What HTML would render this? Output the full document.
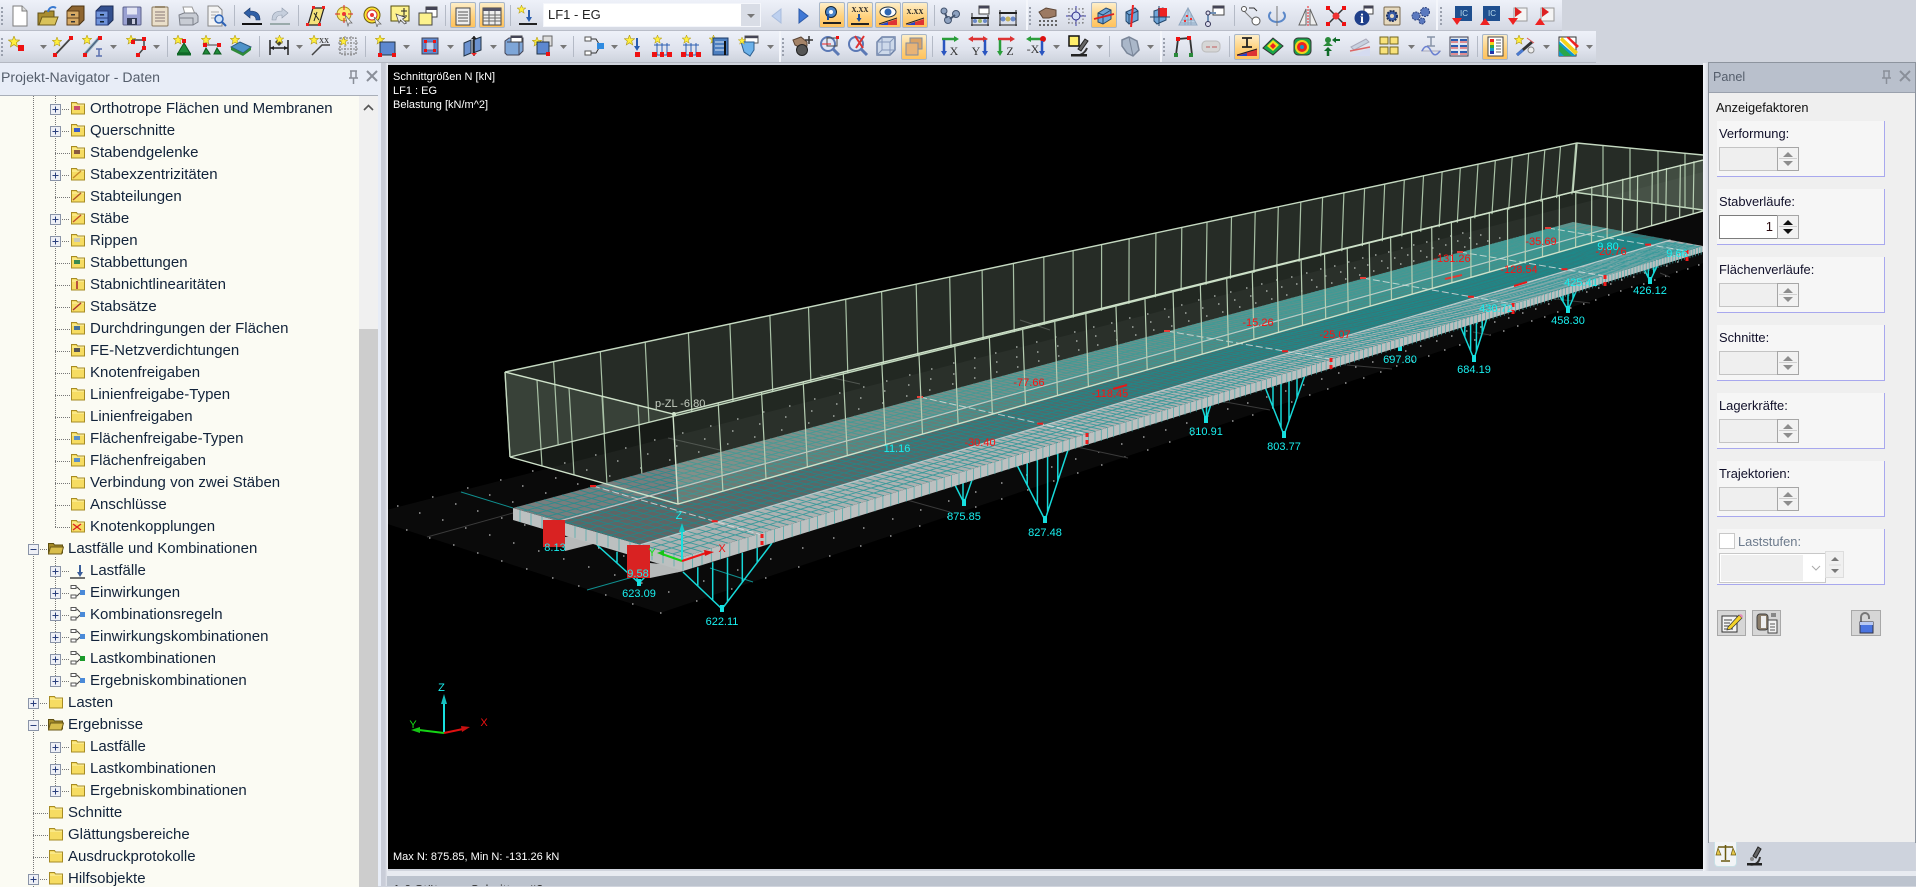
<!DOCTYPE html>
<html lang="de"><head><meta charset="utf-8"><title>Projekt-Navigator</title>
<style>
html,body{margin:0;padding:0;width:1916px;height:886px;overflow:hidden;background:#d0d4dd;font-family:"Liberation Sans",Arial,sans-serif}
.a{position:absolute}
#tb1{position:absolute;left:0;top:0;width:1562px;height:30px;background:linear-gradient(#eef1f9,#dfe3ed 60%,#d5d9e3);border-bottom:1px solid #b9bdc8}
#tb2{position:absolute;left:0;top:31px;width:1596px;height:31px;background:linear-gradient(#eef1f9,#dfe3ed 60%,#ced3dd);border-bottom:1px solid #b4b8c2}
#tools{position:absolute;left:0;top:0;width:1916px;height:64px}
.act{position:absolute;width:26px;height:26px;border:1px solid #a8b6c8;border-radius:2px;background:linear-gradient(#fdeec9,#ffd27f 55%,#ffc25c);box-sizing:border-box}
#combo{position:absolute;left:544px;top:4px;width:216px;height:22px;background:#fff;font-size:13px;line-height:22px;color:#222;text-indent:4px;box-shadow:0 0 0 1px #f4f6fb}
#combo i{position:absolute;right:0;top:0;width:19px;height:22px;background:#d9dde6}
#combo i:after{content:"";position:absolute;left:6px;top:10px;border:4px solid transparent;border-top-color:#777;border-bottom:0}
#nav{position:absolute;left:0;top:63px;width:381px;height:823px;background:#e8edf7}
#navt{position:absolute;left:1px;top:3px;font-size:14.1px;line-height:22px;color:#555e6c;white-space:nowrap}
#tree{position:absolute;left:0;top:95px;width:378px;height:791px;background:#fbfbf3;border-top:1px solid #a9afb9;overflow:hidden}
#sb{position:absolute;left:359px;top:0;width:19px;height:791px;background:#f0f0f0}
#th{position:absolute;left:0;top:233px;width:19px;height:558px;background:#cdcdcd}
.r{position:absolute;font-size:15px;line-height:22px;height:22px;color:#12233a;white-space:nowrap;margin-top:1px}
.l2{left:90px}.l1{left:68px}
#gap{position:absolute;left:381px;top:63px;width:7px;height:823px;background:linear-gradient(90deg,#c9cdd8 0,#c9cdd8 57%,#f0f2f7 100%)}
#view{position:absolute;left:388px;top:65px;width:1315px;height:804px;background:#000;overflow:hidden}
#view svg{display:block}
#view text{font-family:"Liberation Sans",Arial,sans-serif;font-size:11px}
.vt{position:absolute;left:5px;color:#fff;font-size:11px;line-height:14px;white-space:nowrap}
#bot{position:absolute;left:387px;top:871px;width:1529px;height:15px;background:#e8ebf1}
#botb{position:absolute;left:387px;top:876px;width:1529px;height:10px;background:#bcc3ce;overflow:hidden}
#botb span{position:absolute;left:6px;top:6px;font-size:13px;line-height:15px;color:#333;white-space:nowrap}
#pan{position:absolute;left:1709px;top:63px;width:206px;height:779px;background:#efefef;box-shadow:0 0 0 1px #8d949e}
#pant{position:absolute;left:0;top:0;width:206px;height:29px;background:#b9c0cc;border-bottom:1px solid #9aa1ad}
#pant span{position:absolute;left:4px;top:3px;font-size:12.6px;line-height:22px;color:#555e6c}
.g{position:absolute;left:1717px;width:167px;height:55px;background:#f6f6f6;border-right:1px solid #a8a8ee;border-bottom:1px solid #a8a8ee;box-sizing:content-box}
.lb{position:absolute;left:2px;top:4px;font-size:12.9px;line-height:18px;color:#11102a;white-space:nowrap}
.sp{position:absolute;left:2px;top:26px;width:79px;height:24px;background:#efefef;border:1px solid #c4c4c4;box-sizing:border-box}
.sp b{position:absolute;left:57px;top:-1px;width:22px;height:24px;background:#f2f2f2;border:1px solid #a6a6a6;box-sizing:border-box}
.sp b:before,.sp b:after{content:"";position:absolute;left:5px;border:5px solid transparent}
.sp b:before{top:-1px;border-bottom:5px solid #8d8d8d;border-top:0;margin-top:5px}
.sp b:after{bottom:4px;border-top:5px solid #8d8d8d;border-bottom:0}
.sp u{position:absolute;left:1px;right:1px;top:10px;height:1px;background:#cfcfcf;text-decoration:none}
.sp.on{background:#fff;border-color:#7c7c7c}
.sp.on b:before{border-bottom-color:#111}.sp.on b:after{border-top-color:#111}
.sp.on span{position:absolute;right:24px;top:2px;font-size:13px;line-height:18px;color:#2a0b10}
.bt{position:absolute;top:610px;height:26px;background:#d6d6d6;border:1px solid #a8a8a8;box-sizing:border-box}
.bt svg,.tabi svg{display:block;margin:auto}
#tabs{position:absolute;left:1709px;top:842px;width:206px;height:29px;background:#ced3dd}
</style></head><body>

<svg width="0" height="0" style="position:absolute"><defs>
<symbol id="st" viewBox="0 0 10 10"><path d="M5 0l1.200 3.200 3.500.2-2.700 2.100.9 3.500L5 7.100 2.100 9l.9-3.500L.3 3.400l3.500-.2z" fill="#ffef3c" stroke="#b39c1a" stroke-width=".6"/></symbol>
<symbol id="new" viewBox="0 0 22 22"><path d="M4 1h9l5 5v15H4z" fill="#fff" stroke="#7c7c7c"/><path d="M13 1v5h5" fill="#ddd" stroke="#7c7c7c"/></symbol>
<symbol id="open" viewBox="0 0 22 22"><path d="M1 8h6l1-2h9v14H1z" fill="#a98d2f" stroke="#5f4f17"/><path d="M2 20l3-8h16l-3 8z" fill="#d9c25a" stroke="#6b5a1a"/><path d="M11 7c1-5 5-6 8-4" fill="none" stroke="#3a7ad0" stroke-width="2"/></symbol>
<symbol id="dbr" viewBox="0 0 22 22"><path d="M3 6l5-5h12v14l-5 5H3z" fill="#8e6530" stroke="#4c3312"/><rect x="3" y="6" width="12" height="7" fill="#d6a964" stroke="#5c3d1a"/><rect x="3" y="13" width="12" height="7" fill="#d6a964" stroke="#5c3d1a"/><rect x="7" y="9" width="4" height="1.500" fill="#333"/><rect x="7" y="16" width="4" height="1.500" fill="#333"/></symbol>
<symbol id="dbb" viewBox="0 0 22 22"><path d="M3 6l5-5h12v14l-5 5H3z" fill="#33508f" stroke="#1c2d55"/><rect x="3" y="6" width="12" height="7" fill="#6f93da" stroke="#24397a"/><rect x="3" y="13" width="12" height="7" fill="#6f93da" stroke="#24397a"/><rect x="7" y="9" width="4" height="1.500" fill="#123"/><rect x="7" y="16" width="4" height="1.500" fill="#123"/></symbol>
<symbol id="save" viewBox="0 0 22 22"><rect x="2" y="2" width="18" height="18" rx="1" fill="#9aa1d2" stroke="#5d628c"/><rect x="6" y="2.500" width="10" height="7" fill="#e4e6f4"/><rect x="6" y="13" width="10" height="7" fill="#333b55"/><rect x="11" y="14" width="3" height="5" fill="#c6c9dc"/></symbol>
<symbol id="note" viewBox="0 0 22 22"><rect x="3" y="2" width="16" height="19" rx="1" fill="#eadfca" stroke="#8a7a60"/><path d="M6 7h10M6 10h10M6 13h10M6 16h10" stroke="#877"/><rect x="6" y="1" width="10" height="2" fill="#998a70"/></symbol>
<symbol id="print" viewBox="0 0 22 22"><path d="M6 2h9l3 7H8z" fill="#fff" stroke="#999"/><path d="M2 10l5-2h12l2 3v6l-5 3H3z" fill="#c8ccd4" stroke="#7c808a"/><path d="M3 13h13v7" fill="none" stroke="#7c808a"/></symbol>
<symbol id="prev" viewBox="0 0 22 22"><path d="M3 1h10l4 4v16H3z" fill="#f4f4f4" stroke="#888"/><path d="M6 7h8M6 10h5M6 13h4" stroke="#aaa"/><circle cx="14" cy="14" r="4" fill="#cfe3fa" stroke="#2f63b5" stroke-width="1.500"/><path d="M17 17l4 4" stroke="#2f63b5" stroke-width="2"/></symbol>
<symbol id="undo" viewBox="0 0 22 22"><path d="M3 8l6-5v3c6 0 10 2 10 9h-4c0-3-2-5-6-5v3z" fill="#2f5fa6" stroke="#1b3866" stroke-width=".6"/><rect x="1" y="18" width="20" height="2" fill="#111"/></symbol>
<symbol id="redo" viewBox="0 0 22 22"><path d="M19 8l-6-5v3C7 6 3 8 3 15h4c0-3 2-5 6-5v3z" fill="#c6cfdd" stroke="#8f9aab" stroke-width=".6"/><rect x="1" y="18" width="20" height="2" fill="#9aa"/></symbol>
<symbol id="para" viewBox="0 0 22 22"><path d="M8 3h11l-5 17H3z" fill="#f4e27a" stroke="#222" stroke-width="1.200"/><path d="M12 7l-3 9M9 8l5 7" stroke="#222"/><rect x="7" y="1" width="3" height="3" fill="#e22"/><rect x="17" y="1" width="3" height="3" fill="#e22"/><rect x="1" y="18" width="3" height="3" fill="#e22"/><rect x="13" y="18" width="3" height="3" fill="#e22"/></symbol>
<symbol id="tgt1" viewBox="0 0 22 22"><circle cx="10" cy="9" r="7" fill="#fbe96d" stroke="#a3901f"/><path d="M10 0v5M10 13v5M1 9h5M14 9h5" stroke="#d22"/><circle cx="10" cy="9" r="2" fill="#e33"/><path d="M11 10l7 8-3 0-1 3z" fill="#eee" stroke="#666" stroke-width=".7"/></symbol>
<symbol id="tgt2" viewBox="0 0 22 22"><circle cx="10" cy="10" r="8" fill="#fbe232" stroke="#6a5c10"/><circle cx="10" cy="10" r="5" fill="#fff" stroke="#c33"/><circle cx="10" cy="10" r="2" fill="#e33"/><path d="M12 12l7 7-3 0-1 3z" fill="#eee" stroke="#666" stroke-width=".7"/></symbol>
<symbol id="ynote" viewBox="0 0 22 22"><rect x="2" y="1" width="18" height="15" fill="#fdf28d" stroke="#554e10"/><path d="M15 3v7M12 6h6M12 11h6" stroke="#222"/><path d="M7 9l3 9 1.500-3 4 4 2-1-4-4 3-1.500z" fill="#eee" stroke="#444" stroke-width=".7"/></symbol>
<symbol id="wins" viewBox="0 0 22 22"><rect x="9" y="2" width="11" height="10" fill="#fff" stroke="#444"/><rect x="9" y="2" width="11" height="3" fill="#445"/><rect x="2" y="8" width="13" height="12" fill="#fdf28d" stroke="#444"/></symbol>
<symbol id="list" viewBox="0 0 22 22"><rect x="4" y="3" width="14" height="17" fill="#eee" stroke="#444"/><path d="M6 7h10M6 10h10M6 13h10M6 16h10" stroke="#555"/></symbol>
<symbol id="table" viewBox="0 0 22 22"><rect x="2" y="3" width="18" height="17" fill="#eee" stroke="#444"/><rect x="2" y="3" width="18" height="3" fill="#556"/><path d="M2 10h18M2 13h18M2 16h18M8 6v14M14 6v14" stroke="#666"/></symbol>
<symbol id="lc" viewBox="0 0 22 22"><use href="#st" x="0" y="0" width="9" height="9"/><path d="M12 5v9" stroke="#2a5db0" stroke-width="2"/><path d="M9 12l3 5 3-5z" fill="#2a5db0"/><rect x="2" y="18" width="18" height="2" fill="#222"/></symbol>
<symbol id="la" viewBox="0 0 22 22"><path d="M15 4L6 11l9 7z" fill="#bdd0ef" stroke="#a9bddd"/></symbol>
<symbol id="ra" viewBox="0 0 22 22"><path d="M7 4l9 7-9 7z" fill="#3f78d6" stroke="#2d5aa8"/></symbol>
<symbol id="eyeP" viewBox="0 0 22 22"><circle cx="10" cy="7" r="5.500" fill="#4c86c9" stroke="#123" stroke-width="1"/><circle cx="10" cy="7" r="2" fill="#fff"/><path d="M7 9v6" stroke="#1c4fa0" stroke-width="2"/><rect x="2" y="17" width="18" height="2" fill="#222"/></symbol>
<symbol id="xxl" viewBox="0 0 22 22"><text x="11" y="7" text-anchor="middle" font-family="Liberation Serif,serif" font-size="7" font-weight="700" fill="#222">X.XX</text><path d="M10 9v6" stroke="#1c4fa0" stroke-width="2"/><path d="M7.500 13l2.500 4 2.500-4z" fill="#1c4fa0"/><rect x="2" y="18" width="18" height="2" fill="#222"/></symbol>
<symbol id="eye" viewBox="0 0 22 22"><ellipse cx="11" cy="7" rx="8" ry="5" fill="#fff" stroke="#234"/><circle cx="11" cy="7" r="3.500" fill="#2f66b3"/><path d="M2 20l18-6v6z" fill="#d33"/><path d="M2 20l9-3v3z" fill="#24c"/><path d="M2 19l18-6" stroke="#222"/></symbol>
<symbol id="xxa" viewBox="0 0 22 22"><text x="11" y="9" text-anchor="middle" font-family="Liberation Serif,serif" font-size="7" font-weight="700" fill="#222">X.XX</text><path d="M2 20l18-6v6z" fill="#d33"/><path d="M2 20l9-3v3z" fill="#24c"/><path d="M2 19l18-6" stroke="#222"/></symbol>
<symbol id="chain" viewBox="0 0 22 22"><circle cx="5" cy="6" r="3" fill="#8ea2c0" stroke="#44546e"/><circle cx="9" cy="15" r="3.500" fill="#8ea2c0" stroke="#44546e"/><circle cx="17" cy="9" r="3.500" fill="#8ea2c0" stroke="#44546e"/><path d="M6 8l2 5M11 14l5-4" stroke="#44546e" stroke-width="2"/></symbol>
<symbol id="nod1" viewBox="0 0 22 22"><rect x="10" y="1" width="10" height="8" fill="#fff" stroke="#444"/><rect x="10" y="1" width="10" height="2.500" fill="#445"/><path d="M2 13h18" stroke="#222" stroke-width="2"/><path d="M3 8v13M19 10v11M2 20h18" stroke="#222"/><circle cx="6" cy="16" r="2" fill="#6a89c8"/><circle cx="11" cy="16" r="2" fill="#9bb26a"/><circle cx="16" cy="16" r="2" fill="#6a89c8"/></symbol>
<symbol id="nod2" viewBox="0 0 22 22"><path d="M2 8h18" stroke="#222" stroke-width="2"/><path d="M3 5v16M19 5v16M2 20h18" stroke="#222"/><circle cx="6" cy="14" r="2.500" fill="#6a89c8"/><circle cx="11" cy="14" r="2.500" fill="#c3b25a"/><circle cx="16" cy="14" r="2.500" fill="#6a89c8"/></symbol>
<symbol id="hand" viewBox="0 0 22 22"><path d="M2 7l7-4 10 2v6l-7 2H6z" fill="#9c7a63" stroke="#5a4434"/><g fill="#666"><rect x="2" y="15" width="2" height="2"/><rect x="6" y="15" width="2" height="2"/><rect x="10" y="15" width="2" height="2"/><rect x="14" y="15" width="2" height="2"/><rect x="18" y="15" width="2" height="2"/><rect x="2" y="19" width="2" height="2"/><rect x="6" y="19" width="2" height="2"/><rect x="10" y="19" width="2" height="2"/><rect x="14" y="19" width="2" height="2"/><rect x="18" y="19" width="2" height="2"/></g></symbol>
<symbol id="grid" viewBox="0 0 22 22"><path d="M1 11h20M11 1v20" stroke="#3a3aa8"/><circle cx="11" cy="11" r="4" fill="#d6def5" stroke="#2a2a88"/><path d="M3 4h16M3 18h16M4 3v16M18 3v16" stroke="#666" stroke-dasharray="1.500 2"/></symbol>
<symbol id="cube1" viewBox="0 0 22 22"><path d="M5 8l8-5 5 2v9l-8 5-5-2z" fill="#6fa5d8" stroke="#24486d"/><path d="M5 8l5 2v9M10 10l8-5" fill="none" stroke="#24486d"/><path d="M1 14L21 9" stroke="#d22" stroke-width="1.800"/></symbol>
<symbol id="cube2" viewBox="0 0 22 22"><path d="M5 7l9-4 3 3v9l-9 4-3-3z" fill="#6fa5d8" stroke="#24486d"/><path d="M5 7l3 3v9M8 10l9-4" fill="none" stroke="#24486d"/><path d="M12 0L10 22" stroke="#e22" stroke-width="2"/></symbol>
<symbol id="cube3" viewBox="0 0 22 22"><path d="M5 6l9-3 3 3v9l-9 4-3-3z" fill="#6fa5d8" stroke="#24486d"/><rect x="9" y="3" width="9" height="9" fill="#e22"/><path d="M1 12h20M10 1v20" stroke="#24486d"/></symbol>
<symbol id="mesh" viewBox="0 0 22 22"><path d="M2 20L11 3l9 17z" fill="#bcd3e8" stroke="#8fa6bf"/><path d="M5 15h12M3 18h16M8 8v12M11 4v16M14 8v12" stroke="#93a8c0"/><g fill="#e33"><rect x="9" y="10" width="2" height="2"/><rect x="13" y="13" width="2" height="2"/><rect x="7" y="15" width="2" height="2"/></g></symbol>
<symbol id="path" viewBox="0 0 22 22"><rect x="9" y="1" width="11" height="9" fill="#fff" stroke="#444"/><rect x="9" y="1" width="11" height="2.500" fill="#445"/><path d="M4 20V8h8" fill="none" stroke="#6f8fb5" stroke-width="2"/><circle cx="4" cy="19" r="2.500" fill="#dde" stroke="#335"/><circle cx="4" cy="8" r="2" fill="#dde" stroke="#335"/></symbol>
<symbol id="link" viewBox="0 0 22 22"><path d="M3 5l14 14" stroke="#777"/><circle cx="4" cy="4" r="2.500" fill="#fff" stroke="#555"/><circle cx="16" cy="16" r="4" fill="#fff" stroke="#555"/><path d="M9 3h5l3 3" fill="none" stroke="#333"/></symbol>
<symbol id="rot" viewBox="0 0 22 22"><path d="M5 7a8 6 0 1 0 12 0" fill="none" stroke="#5b88c9" stroke-width="2"/><path d="M11 1v20" stroke="#777"/></symbol>
<symbol id="mirror" viewBox="0 0 22 22"><path d="M9 4L2 20h7zM13 4l7 16h-7z" fill="#eee" stroke="#666"/><path d="M11 1v20" stroke="#e22" stroke-dasharray="2 1"/></symbol>
<symbol id="xn" viewBox="0 0 22 22"><path d="M3 3l16 16M19 3L3 19" stroke="#333" stroke-width="1.500"/><circle cx="11" cy="11" r="3.500" fill="#e33"/><g fill="#e11"><rect x="1" y="1" width="4" height="4"/><rect x="17" y="1" width="4" height="4"/><rect x="1" y="17" width="4" height="4"/><rect x="17" y="17" width="4" height="4"/></g></symbol>
<symbol id="info" viewBox="0 0 22 22"><rect x="11" y="1" width="9" height="8" fill="#fff" stroke="#444"/><rect x="11" y="1" width="9" height="2.500" fill="#445"/><circle cx="9" cy="13" r="7.500" fill="#1f3f8a"/><text x="9" y="18" text-anchor="middle" font-family="Liberation Serif,serif" font-size="14" font-weight="700" fill="#fff">i</text></symbol>
<symbol id="gear" viewBox="0 0 22 22"><rect x="3" y="2" width="16" height="18" rx="1" fill="#e6d9be" stroke="#7a6a50"/><circle cx="11" cy="11" r="5" fill="#3a5da8" stroke="#1b2f5f" stroke-width="2" stroke-dasharray="2 1"/><circle cx="11" cy="11" r="2" fill="#e6d9be"/></symbol>
<symbol id="gears" viewBox="0 0 22 22"><g fill="#5b79bf" stroke="#2a3f7c" stroke-dasharray="2 1"><circle cx="6" cy="11" r="4"/><circle cx="15" cy="7" r="4.500"/><circle cx="12" cy="16" r="3"/></g></symbol>
<symbol id="ex1" viewBox="0 0 22 22"><rect x="4" y="1" width="17" height="15" fill="#1f4f8f"/><text x="13" y="11" text-anchor="middle" font-size="8" fill="#bde">IC</text><path d="M1 13h10l-5 7z" fill="#e22"/></symbol>
<symbol id="ex2" viewBox="0 0 22 22"><rect x="4" y="1" width="17" height="15" fill="#1f4f8f"/><text x="13" y="11" text-anchor="middle" font-size="8" fill="#bde">IC</text><path d="M1 20h10L6 13z" fill="#e22"/></symbol>
<symbol id="pdf1" viewBox="0 0 22 22"><rect x="7" y="3" width="13" height="13" fill="#f4f4f4" stroke="#999"/><path d="M8 2l7 5-7 5z" fill="#d22"/><path d="M1 13h10l-5 7z" fill="#e22"/></symbol>
<symbol id="pdf2" viewBox="0 0 22 22"><rect x="7" y="3" width="13" height="13" fill="#f4f4f4" stroke="#999"/><path d="M8 2l7 5-7 5z" fill="#d22"/><path d="M1 20h10L6 13z" fill="#e22"/></symbol>
<symbol id="nstar" viewBox="0 0 22 22"><use href="#st" x="1" y="1" width="12" height="12"/><rect x="11" y="10" width="6" height="6" fill="#e11"/></symbol>
<symbol id="line" viewBox="0 0 22 22"><use href="#st" x="0" y="2" width="10" height="10"/><path d="M3 20L19 3" stroke="#444" stroke-width="1.800"/><rect x="1" y="18" width="4" height="4" fill="#e11"/><rect x="17" y="1" width="4" height="4" fill="#e11"/></symbol>
<symbol id="linei" viewBox="0 0 22 22"><use href="#st" x="0" y="0" width="10" height="10"/><path d="M3 19L17 3" stroke="#8ab" stroke-width="3"/><path d="M3 19L17 3" stroke="#457"/><rect x="1" y="18" width="4" height="4" fill="#e11"/><rect x="16" y="1" width="4" height="4" fill="#e11"/><path d="M14 14h6M17 14v7M14 21h6" stroke="#5a6fae" stroke-width="1.500"/></symbol>
<symbol id="poly" viewBox="0 0 22 22"><use href="#st" x="0" y="0" width="10" height="10"/><path d="M6 5h12v8l-6 7" fill="none" stroke="#444" stroke-width="1.500"/><rect x="16" y="2" width="4" height="4" fill="#e11"/><rect x="16" y="11" width="4" height="4" fill="#e11"/><rect x="10" y="18" width="4" height="4" fill="#e11"/><rect x="5" y="5" width="4" height="4" fill="#e11"/></symbol>
<symbol id="sup" viewBox="0 0 22 22"><use href="#st" x="0" y="0" width="10" height="10"/><rect x="9" y="4" width="4" height="4" fill="#e11"/><path d="M11 8l-6 10h12z" fill="#1f8a3a" stroke="#0d5a20"/><rect x="4" y="18" width="14" height="2.500" fill="#0f6a28"/></symbol>
<symbol id="sups" viewBox="0 0 22 22"><use href="#st" x="0" y="0" width="10" height="10"/><path d="M3 10h16" stroke="#444"/><rect x="2" y="8" width="4" height="4" fill="#e11"/><rect x="16" y="8" width="4" height="4" fill="#e11"/><path d="M5 13l-3 6h7zM16 13l-3 6h7z" fill="#1f8a3a" stroke="#0d5a20"/></symbol>
<symbol id="surf2" viewBox="0 0 22 22"><use href="#st" x="0" y="0" width="10" height="10"/><path d="M1 12l9-5 11 5-8 6z" fill="#4f93c9" stroke="#2a5780"/><path d="M1 12v3l12 6 8-6v-3l-8 6z" fill="#2f8a3a"/></symbol>
<symbol id="dim" viewBox="0 0 22 22"><path d="M2 5v15M20 5v15M2 13h18" stroke="#222" stroke-width="1.500"/><path d="M2 13l4-2v4zM20 13l-4-2v4z" fill="#222"/><path d="M11 3l4 4-4 4-4-4z" fill="#443"/><use href="#st" x="7" y="0" width="9" height="9"/></symbol>
<symbol id="xxln" viewBox="0 0 22 22"><use href="#st" x="0" y="0" width="10" height="10"/><path d="M3 20L13 10h8" fill="none" stroke="#444" stroke-width="1.500"/><text x="15" y="8" text-anchor="middle" font-family="Liberation Serif,serif" font-size="7" font-weight="700" fill="#444">XX</text></symbol>
<symbol id="gridb" viewBox="0 0 22 22"><rect x="3" y="3" width="16" height="16" fill="none" stroke="#666" stroke-dasharray="2 1"/><path d="M8 1v20M14 1v20M1 8h20M1 14h20" stroke="#888" stroke-dasharray="2 1"/><use href="#st" x="2" y="2" width="9" height="9"/></symbol>
<symbol id="surfn" viewBox="0 0 22 22"><use href="#st" x="0" y="0" width="10" height="10"/><rect x="5" y="7" width="15" height="13" fill="#5d88d0" stroke="#234"/><rect x="3" y="18" width="4" height="4" fill="#e11"/><rect x="17" y="18" width="4" height="4" fill="#e11"/></symbol>
<symbol id="sq" viewBox="0 0 22 22"><rect x="3" y="3" width="16" height="16" fill="#5d88d0" stroke="#445"/><rect x="7" y="7" width="8" height="8" fill="#bcd0ee" stroke="#668"/><g fill="#e11"><rect x="5" y="5" width="3" height="3"/><rect x="14" y="5" width="3" height="3"/><rect x="5" y="14" width="3" height="3"/><rect x="14" y="14" width="3" height="3"/></g></symbol>
<symbol id="plates" viewBox="0 0 22 22"><path d="M2 8l7-3v13l-7 3zM11 5l8-3v13l-8 3z" fill="#6b92d0" stroke="#234"/><path d="M12 1v20" stroke="#222" stroke-width="1.500"/><path d="M9 4l3-3 3 3z" fill="#222"/><path d="M9 18l3 3 3-3z" fill="#e22"/></symbol>
<symbol id="solid" viewBox="0 0 22 22"><path d="M3 6l4-3h14v13l-4 4H5l-2-2z" fill="#7ea6d8" stroke="#445"/><path d="M5 7h12v13" fill="none" stroke="#445"/><rect x="9" y="1" width="11" height="6" fill="#fff" stroke="#444"/><rect x="9" y="1" width="11" height="2" fill="#445"/></symbol>
<symbol id="surfs" viewBox="0 0 22 22"><use href="#st" x="0" y="2" width="10" height="10"/><rect x="11" y="1" width="9" height="10" fill="#ddd" stroke="#666"/><rect x="5" y="7" width="12" height="12" fill="#5d88d0" stroke="#234"/><rect x="14" y="17" width="4" height="4" fill="#e11"/></symbol>
<symbol id="conn" viewBox="0 0 22 22"><rect x="2" y="2" width="6" height="4" fill="#fff" stroke="#555"/><rect x="2" y="16" width="6" height="4" fill="#fff" stroke="#555"/><path d="M8 4h5l3 5M8 18h5l3-5" fill="none" stroke="#333"/><rect x="14" y="8" width="7" height="6" fill="#2f8be0"/></symbol>
<symbol id="load" viewBox="0 0 22 22"><use href="#st" x="0" y="0" width="11" height="11"/><path d="M13 3v10" stroke="#2a5db0" stroke-width="2"/><path d="M10 11l3 5 3-5z" fill="#2a5db0"/><rect x="11" y="17" width="5" height="5" fill="#e11"/></symbol>
<symbol id="frm" viewBox="0 0 22 22"><use href="#st" x="2" y="0" width="9" height="9"/><path d="M3 10h16M6 8v12M16 8v12M3 20h16M11 8v12" stroke="#2a5db0"/><g fill="#e11"><rect x="1" y="17" width="5" height="5"/><rect x="16" y="17" width="5" height="5"/><rect x="9" y="17" width="4" height="5"/></g></symbol>
<symbol id="frb" viewBox="0 0 22 22"><use href="#st" x="0" y="0" width="9" height="9"/><rect x="4" y="3" width="15" height="17" fill="#4d7fc0" stroke="#1b3a66"/><path d="M6 7h11M6 11h11M6 15h11" stroke="#dbe7f6"/><path d="M16 6v14" stroke="#111" stroke-width="2"/></symbol>
<symbol id="frw" viewBox="0 0 22 22"><rect x="7" y="1" width="13" height="7" fill="#fff" stroke="#555"/><rect x="7" y="1" width="13" height="2.200" fill="#445"/><path d="M3 7h13v8l-4 6-6-4z" fill="#6cb2ea" stroke="#2d5f8f"/><use href="#st" x="0" y="2" width="8" height="8"/></symbol>
<symbol id="hand2" viewBox="0 0 22 22"><path d="M2 5l8-3 6 5v4l-6 2L4 10z" fill="#a48368" stroke="#5a4434"/><circle cx="11" cy="15" r="5.500" fill="#555" stroke="#222"/><path d="M18 1v8M14 5h8" stroke="#333" stroke-width="1.500"/></symbol>
<symbol id="zf" viewBox="0 0 22 22"><circle cx="9" cy="9" r="7" fill="#dfe7f6" stroke="#5b79b5" stroke-width="2"/><path d="M14 14l6 6" stroke="#5b79b5" stroke-width="3"/><rect x="8" y="3" width="10" height="8" fill="none" stroke="#444"/><rect x="17" y="1" width="3" height="3" fill="#e11"/><path d="M3 9h9" stroke="#e22"/></symbol>
<symbol id="zx" viewBox="0 0 22 22"><circle cx="9" cy="9" r="7" fill="#dfe7f6" stroke="#5b79b5" stroke-width="2"/><path d="M14 14l6 6" stroke="#5b79b5" stroke-width="3"/><path d="M8 1l8 12M17 1L9 13" stroke="#d33" stroke-width="2"/></symbol>
<symbol id="wire" viewBox="0 0 22 22"><path d="M2 7l5-5h13v13l-5 5H2z" fill="#cdd9ea" stroke="#6a7fa5" stroke-width="1.400"/><path d="M2 7h13v13M15 7l5-5M7 2v13H20M7 15l-5 5" fill="none" stroke="#8598bb"/></symbol>
<symbol id="bx" viewBox="0 0 22 22"><rect x="7" y="3" width="12" height="11" fill="#dba365" stroke="#7f8ba0"/><rect x="3" y="8" width="12" height="12" fill="#e8b376" stroke="#7f8ba0"/></symbol>
<symbol id="vx" viewBox="0 0 22 22"><path d="M3 4h15" stroke="#2a9d3a" stroke-width="2.500"/><path d="M15 1l5 3-5 3z" fill="#2a9d3a"/><path d="M5 5v14" stroke="#2a55c0" stroke-width="2.500"/><path d="M2 16l3 5 3-5z" fill="#2a55c0"/><text x="15" y="20" text-anchor="middle" font-size="12" font-family="Liberation Serif,serif" fill="#333">X</text></symbol>
<symbol id="vy" viewBox="0 0 22 22"><path d="M2 4h16" stroke="#d33" stroke-width="2.500"/><path d="M5 1L0 4l5 3zM15 1l5 3-5 3z" fill="#d33"/><path d="M17 5v14" stroke="#2a55c0" stroke-width="2.500"/><path d="M14 16l3 5 3-5z" fill="#2a55c0"/><text x="8" y="20" text-anchor="middle" font-size="12" font-family="Liberation Serif,serif" fill="#333">Y</text></symbol>
<symbol id="vz" viewBox="0 0 22 22"><path d="M3 4h15" stroke="#d33" stroke-width="2.500"/><path d="M15 1l5 3-5 3z" fill="#d33"/><path d="M5 5v14" stroke="#2a9d3a" stroke-width="2.500"/><path d="M2 16l3 5 3-5z" fill="#2a9d3a"/><text x="15" y="20" text-anchor="middle" font-size="12" font-family="Liberation Serif,serif" fill="#333">Z</text></symbol>
<symbol id="vmx" viewBox="0 0 22 22"><path d="M3 4h15" stroke="#2a9d3a" stroke-width="2.500"/><path d="M6 1L1 4l5 3z" fill="#2a9d3a"/><circle cx="18" cy="4" r="3" fill="#d11"/><path d="M17 6v13" stroke="#2a55c0" stroke-width="2.500"/><path d="M14 16l3 5 3-5z" fill="#2a55c0"/><text x="8" y="18" text-anchor="middle" font-size="12" font-family="Liberation Serif,serif" fill="#333">-X</text></symbol>
<symbol id="mic" viewBox="0 0 22 22"><rect x="1" y="1" width="10" height="10" fill="#ffef6b" stroke="#111" stroke-width="1.500"/><path d="M17 4l-7 10 3 2 7-10z" fill="#666" stroke="#222"/><path d="M5 20c5 1 11 0 14-7" fill="none" stroke="#333" stroke-width="2"/><rect x="3" y="19" width="16" height="2.500" fill="#222"/></symbol>
<symbol id="shp" viewBox="0 0 22 22"><path d="M3 5l7-3 8 4 2 9-6 6-6-3-5-7z" fill="#aab7c9" stroke="#7a8699" stroke-width="1.500"/><path d="M10 2l4 19" stroke="#7a8699"/></symbol>
<symbol id="frt" viewBox="0 0 22 22"><path d="M4 20L6 4l12-1 2 17" fill="none" stroke="#333" stroke-width="1.800"/><rect x="2" y="18" width="4" height="4" fill="#2a8a3a"/><rect x="17" y="18" width="4" height="4" fill="#2a8a3a"/><rect x="4" y="2" width="4" height="4" fill="#e11"/><rect x="15" y="1" width="4" height="4" fill="#e11"/></symbol>
<symbol id="pil" viewBox="0 0 22 22"><rect x="2" y="6" width="18" height="11" rx="4" fill="#d6d6d6" stroke="#bbb"/><path d="M6 12h4M12 12h5" stroke="#c99" stroke-width="2"/></symbol>
<symbol id="beam" viewBox="0 0 22 22"><path d="M6 3h10M6 12h10M11 3v9" stroke="#222" stroke-width="1.800"/><path d="M1 20l20-6v7H1z" fill="#d33"/><path d="M1 21l10-3v3z" fill="#24c"/><path d="M1 20l20-6" stroke="#222"/></symbol>
<symbol id="rain" viewBox="0 0 22 22"><path d="M1 13l10-10 10 8-10 9z" fill="#1aa64a" stroke="#333"/><path d="M5 11l6-6 6 5-6 6z" fill="#f2e11a"/><path d="M8 11l3-3 3 3-3 3z" fill="#e22"/></symbol>
<symbol id="cuber" viewBox="0 0 22 22"><rect x="3" y="3" width="17" height="17" rx="4" fill="#1ba14a" stroke="#333"/><circle cx="11" cy="12" r="7" fill="#f0d31a"/><circle cx="11" cy="12" r="5" fill="#e22"/><circle cx="11" cy="12" r="2" fill="#19c"/></symbol>
<symbol id="grn" viewBox="0 0 22 22"><circle cx="9" cy="5" r="3" fill="#2a8a3a"/><path d="M4 11l5-4 5 4z" fill="#2a8a3a"/><path d="M9 21v-7" stroke="#0f6a28" stroke-width="2.500"/><path d="M5 16l4-4 4 4z" fill="#0f6a28"/><path d="M21 5h-6" stroke="#0f6a28" stroke-width="2"/><path d="M17 2l-4 3 4 3z" fill="#0f6a28"/></symbol>
<symbol id="dia" viewBox="0 0 22 22"><path d="M2 12L17 4l3 3L5 15z" fill="#c8d2e0" stroke="#aab"/><path d="M1 16l20-4" stroke="#d66" stroke-width="1.500"/><path d="M1 21l20-8v8z" fill="#d5dbf0"/></symbol>
<symbol id="four" viewBox="0 0 22 22"><g fill="#f8e27a" stroke="#6f6420"><rect x="2" y="2" width="8" height="7"/><rect x="12" y="2" width="8" height="7"/><rect x="2" y="12" width="8" height="7"/><rect x="12" y="12" width="8" height="7"/></g></symbol>
<symbol id="wav" viewBox="0 0 22 22"><path d="M7 2h8M7 11h8M11 2v9" stroke="#8894a8" stroke-width="1.500"/><path d="M1 16h20" stroke="#aab"/><path d="M2 16c3-6 6-6 9 0s6 4 9 0" fill="none" stroke="#6a80d0" stroke-width="1.500"/></symbol>
<symbol id="tbl" viewBox="0 0 22 22"><rect x="2" y="2" width="18" height="19" fill="#dfe7f2" stroke="#445"/><g fill="#2a5db0"><rect x="3" y="4" width="7" height="2"/><rect x="12" y="4" width="7" height="2"/><rect x="3" y="10" width="7" height="2"/><rect x="12" y="10" width="7" height="2"/><rect x="3" y="16" width="7" height="2"/><rect x="12" y="16" width="7" height="2"/></g><path d="M3 7h7M12 7h7M3 13h7M12 13h7M3 19h7M12 19h7" stroke="#d33"/></symbol>
<symbol id="leg" viewBox="0 0 22 22"><rect x="4" y="2" width="15" height="19" fill="#fff" stroke="#444"/><rect x="6" y="4" width="4" height="3" fill="#e22"/><rect x="6" y="7" width="4" height="3" fill="#f4d21a"/><rect x="6" y="10" width="4" height="3" fill="#2aa64a"/><rect x="6" y="13" width="4" height="3" fill="#19c"/><rect x="6" y="16" width="4" height="3" fill="#23a"/><path d="M12 5h5M12 8h5M12 11h5M12 14h5M12 17h5" stroke="#666"/></symbol>
<symbol id="wand" viewBox="0 0 22 22"><use href="#st" x="0" y="0" width="10" height="10"/><path d="M3 20L18 7" stroke="#333" stroke-width="3"/><path d="M3 20l6-5" stroke="#4a7ad0" stroke-width="3"/><path d="M13 3l7 5" stroke="#d55"/><circle cx="17" cy="15" r="3" fill="#eee" stroke="#888"/></symbol>
<symbol id="col" viewBox="0 0 22 22"><rect x="2" y="2" width="17" height="19" fill="#fff" stroke="#333"/><path d="M2 6l17 15H2z" fill="#19c"/><path d="M2 9l13 12H7L2 16z" fill="#2aa64a"/><path d="M5 2l16 15-3 3L3 5z" fill="#f4d21a"/><path d="M9 2l11 11 2-2L12 2z" fill="#e22"/></symbol>
<symbol id="fo" viewBox="0 0 16 16"><path d="M1.500 4V2.500h5l1 1.500h7v10h-13z" fill="#f6dc62" stroke="#a68b24"/><path d="M2 5h12" stroke="#fff3a8"/></symbol>
<symbol id="foo" viewBox="0 0 16 16"><path d="M.5 13V3.500h5l1 1.500h8v8z" fill="#a48a27" stroke="#5e4f12"/><path d="M.5 14l2-7h13l-2 7z" fill="#d8bd4c" stroke="#6b5a1a"/></symbol>
<symbol id="bl" viewBox="0 0 16 16"><path d="M2 3h5M2 12h5M7 3l3 3M7 12l3-3" stroke="#444" fill="none"/><rect x="1" y="1.500" width="5" height="3" fill="#fff" stroke="#555"/><rect x="1" y="11" width="5" height="3" fill="#fff" stroke="#555"/></symbol>
</defs></svg>

<div id="tb1"></div><div id="tb2"></div>
<div class="act" style="left:450px;top:2px"></div><div class="act" style="left:479px;top:2px"></div>
<div class="act" style="left:819px;top:2px"></div><div class="act" style="left:847px;top:2px"></div><div class="act" style="left:875px;top:2px"></div><div class="act" style="left:902px;top:2px"></div>
<div class="act" style="left:1091px;top:2px"></div>
<div class="act" style="left:901px;top:34px"></div><div class="act" style="left:1234px;top:34px"></div><div class="act" style="left:1482px;top:34px"></div>
<div id="combo">LF1 - EG<i></i></div>

<svg id="tools" viewBox="0 0 1916 64">
<g fill="#b4bac6"><rect x="234" y="5" width="1" height="21"/><rect x="298" y="5" width="1" height="21"/><rect x="445" y="5" width="1" height="21"/><rect x="510" y="5" width="1" height="21"/><rect x="934" y="5" width="1" height="21"/><rect x="1234" y="5" width="1" height="21"/>
<rect x="167" y="36" width="1" height="21"/><rect x="259" y="36" width="1" height="21"/><rect x="365" y="36" width="1" height="21"/><rect x="573" y="36" width="1" height="21"/><rect x="932" y="36" width="1" height="21"/><rect x="1109" y="36" width="1" height="21"/><rect x="1229" y="36" width="1" height="21"/><rect x="1477" y="36" width="1" height="21"/></g>
<g fill="#f4f6fb"><rect x="1026" y="0" width="2" height="30"/><rect x="1436" y="0" width="2" height="30"/><rect x="779" y="31" width="2" height="31"/><rect x="1160" y="31" width="2" height="31"/></g>
<g stroke="#9aa0ad" stroke-width="2" stroke-dasharray="2 2"><path d="M2 7v18M1030 7v18M1441 7v18M2 38v18M783 38v18M1164 38v18"/></g>
<g fill="#777"><path d="M40 45h7l-3.500 4zM110 45h7l-3.500 4zM153 45h7l-3.500 4zM296 45h7l-3.500 4zM403 45h7l-3.500 4zM447 45h7l-3.500 4zM490 45h7l-3.500 4zM560 45h7l-3.500 4zM611 45h7l-3.500 4zM767 45h7l-3.500 4zM1053 45h7l-3.500 4zM1096 45h7l-3.500 4zM1147 45h7l-3.500 4zM1408 45h7l-3.500 4zM1543 45h7l-3.500 4zM1586 45h7l-3.500 4z"/></g>
<g>
<use href="#new" x="9" y="5" width="22" height="22"/><use href="#open" x="37" y="5" width="22" height="22"/><use href="#dbr" x="64" y="5" width="22" height="22"/><use href="#dbb" x="93" y="5" width="22" height="22"/><use href="#save" x="121" y="5" width="22" height="22"/><use href="#note" x="149" y="5" width="22" height="22"/><use href="#print" x="177" y="5" width="22" height="22"/><use href="#prev" x="205" y="5" width="22" height="22"/><use href="#undo" x="241" y="5" width="22" height="22"/><use href="#redo" x="269" y="5" width="22" height="22"/><use href="#para" x="305" y="5" width="22" height="22"/><use href="#tgt1" x="334" y="5" width="22" height="22"/><use href="#tgt2" x="362" y="5" width="22" height="22"/><use href="#ynote" x="389" y="5" width="22" height="22"/><use href="#wins" x="417" y="5" width="22" height="22"/><use href="#list" x="452" y="5" width="22" height="22"/><use href="#table" x="481" y="5" width="22" height="22"/><use href="#lc" x="517" y="5" width="22" height="22"/>
<use href="#la" x="766" y="5" width="22" height="22"/><use href="#ra" x="792" y="5" width="22" height="22"/><use href="#eyeP" x="821" y="5" width="22" height="22"/><use href="#xxl" x="849" y="5" width="22" height="22"/><use href="#eye" x="877" y="5" width="22" height="22"/><use href="#xxa" x="904" y="5" width="22" height="22"/><use href="#chain" x="939" y="5" width="22" height="22"/><use href="#nod1" x="969" y="5" width="22" height="22"/><use href="#nod2" x="997" y="5" width="22" height="22"/><use href="#hand" x="1037" y="5" width="22" height="22"/><use href="#grid" x="1065" y="5" width="22" height="22"/><use href="#cube1" x="1093" y="5" width="22" height="22"/><use href="#cube2" x="1121" y="5" width="22" height="22"/><use href="#cube3" x="1149" y="5" width="22" height="22"/><use href="#mesh" x="1177" y="5" width="22" height="22"/><use href="#path" x="1204" y="5" width="22" height="22"/><use href="#link" x="1240" y="5" width="22" height="22"/><use href="#rot" x="1266" y="5" width="22" height="22"/><use href="#mirror" x="1297" y="5" width="22" height="22"/><use href="#xn" x="1325" y="5" width="22" height="22"/><use href="#info" x="1353" y="5" width="22" height="22"/><use href="#gear" x="1381" y="5" width="22" height="22"/><use href="#gears" x="1410" y="5" width="22" height="22"/><use href="#ex1" x="1451" y="5" width="22" height="22"/><use href="#ex2" x="1479" y="5" width="22" height="22"/><use href="#pdf1" x="1507" y="5" width="22" height="22"/><use href="#pdf2" x="1534" y="5" width="22" height="22"/>
<use href="#nstar" x="7" y="35" width="22" height="22"/><use href="#line" x="52" y="35" width="22" height="22"/><use href="#linei" x="82" y="35" width="22" height="22"/><use href="#poly" x="126" y="35" width="22" height="22"/><use href="#sup" x="173" y="35" width="22" height="22"/><use href="#sups" x="201" y="35" width="22" height="22"/><use href="#surf2" x="230" y="35" width="22" height="22"/><use href="#dim" x="268" y="35" width="22" height="22"/><use href="#xxln" x="309" y="35" width="22" height="22"/><use href="#gridb" x="337" y="35" width="22" height="22"/><use href="#surfn" x="375" y="35" width="22" height="22"/><use href="#sq" x="419" y="35" width="22" height="22"/><use href="#plates" x="462" y="35" width="22" height="22"/><use href="#solid" x="502" y="35" width="22" height="22"/><use href="#surfs" x="532" y="35" width="22" height="22"/><use href="#conn" x="583" y="35" width="22" height="22"/><use href="#load" x="624" y="35" width="22" height="22"/><use href="#frm" x="651" y="35" width="22" height="22"/><use href="#frm" x="680" y="35" width="22" height="22"/><use href="#frb" x="709" y="35" width="22" height="22"/><use href="#frw" x="738" y="35" width="22" height="22"/><use href="#hand2" x="791" y="35" width="22" height="22"/><use href="#zf" x="819" y="35" width="22" height="22"/><use href="#zx" x="847" y="35" width="22" height="22"/><use href="#wire" x="875" y="35" width="22" height="22"/><use href="#bx" x="903" y="35" width="22" height="22"/><use href="#vx" x="939" y="35" width="22" height="22"/><use href="#vy" x="968" y="35" width="22" height="22"/><use href="#vz" x="995" y="35" width="22" height="22"/><use href="#vmx" x="1025" y="35" width="22" height="22"/><use href="#mic" x="1068" y="35" width="22" height="22"/><use href="#shp" x="1119" y="35" width="22" height="22"/><use href="#frt" x="1172" y="35" width="22" height="22"/><use href="#pil" x="1200" y="35" width="22" height="22"/><use href="#beam" x="1236" y="35" width="22" height="22"/><use href="#rain" x="1262" y="35" width="22" height="22"/><use href="#cuber" x="1291" y="35" width="22" height="22"/><use href="#grn" x="1319" y="35" width="22" height="22"/><use href="#dia" x="1349" y="35" width="22" height="22"/><use href="#four" x="1378" y="35" width="22" height="22"/><use href="#wav" x="1420" y="35" width="22" height="22"/><use href="#tbl" x="1448" y="35" width="22" height="22"/><use href="#leg" x="1484" y="35" width="22" height="22"/><use href="#wand" x="1514" y="35" width="22" height="22"/><use href="#col" x="1557" y="35" width="22" height="22"/>
</g></svg>

<div id="nav">
<div id="navt">Projekt-Navigator - Daten</div>
<svg class="a" style="left:345px;top:5px" width="36" height="18" viewBox="0 0 36 18"><path d="M5 3h7M6 3v7M11 3v7M4 10h9M8.500 10v6" fill="none" stroke="#8a8f99" stroke-width="1.500"/><path d="M22 3l10 10M32 3L22 13" stroke="#8a8f99" stroke-width="2"/></svg>
</div>
<div id="tree">
<svg class="a" style="left:0;top:0" width="359" height="791" viewBox="0 95 359 791" id="tsvg">
<g stroke="#777" stroke-dasharray="1 1" fill="none"><path d="M33.500 95V886M55.500 95V526M55.500 556V680M55.500 754V790"/><path id="tdots" d=""/></g>
<g id="tic"></g>
<g id="tbx"></g>
</svg>
<div class="r l2" style="top:1px">Orthotrope Flächen und Membranen</div>
<div class="r l2" style="top:23px">Querschnitte</div>
<div class="r l2" style="top:45px">Stabendgelenke</div>
<div class="r l2" style="top:67px">Stabexzentrizitäten</div>
<div class="r l2" style="top:89px">Stabteilungen</div>
<div class="r l2" style="top:111px">Stäbe</div>
<div class="r l2" style="top:133px">Rippen</div>
<div class="r l2" style="top:155px">Stabbettungen</div>
<div class="r l2" style="top:177px">Stabnichtlinearitäten</div>
<div class="r l2" style="top:199px">Stabsätze</div>
<div class="r l2" style="top:221px">Durchdringungen der Flächen</div>
<div class="r l2" style="top:243px">FE-Netzverdichtungen</div>
<div class="r l2" style="top:265px">Knotenfreigaben</div>
<div class="r l2" style="top:287px">Linienfreigabe-Typen</div>
<div class="r l2" style="top:309px">Linienfreigaben</div>
<div class="r l2" style="top:331px">Flächenfreigabe-Typen</div>
<div class="r l2" style="top:353px">Flächenfreigaben</div>
<div class="r l2" style="top:375px">Verbindung von zwei Stäben</div>
<div class="r l2" style="top:397px">Anschlüsse</div>
<div class="r l2" style="top:419px">Knotenkopplungen</div>
<div class="r l1" style="top:441px">Lastfälle und Kombinationen</div>
<div class="r l2" style="top:463px">Lastfälle</div>
<div class="r l2" style="top:485px">Einwirkungen</div>
<div class="r l2" style="top:507px">Kombinationsregeln</div>
<div class="r l2" style="top:529px">Einwirkungskombinationen</div>
<div class="r l2" style="top:551px">Lastkombinationen</div>
<div class="r l2" style="top:573px">Ergebniskombinationen</div>
<div class="r l1" style="top:595px">Lasten</div>
<div class="r l1" style="top:617px">Ergebnisse</div>
<div class="r l2" style="top:639px">Lastfälle</div>
<div class="r l2" style="top:661px">Lastkombinationen</div>
<div class="r l2" style="top:683px">Ergebniskombinationen</div>
<div class="r l1" style="top:705px">Schnitte</div>
<div class="r l1" style="top:727px">Glättungsbereiche</div>
<div class="r l1" style="top:749px">Ausdruckprotokolle</div>
<div class="r l1" style="top:771px">Hilfsobjekte</div>
<div id="sb"><div id="th"></div><svg class="a" style="left:3px;top:6px" width="13" height="12" viewBox="0 0 13 12"><path d="M2 8l4.500-4.500L11 8" fill="none" stroke="#555" stroke-width="1.600"/></svg></div>
</div>
<div id="gap"></div>

<div id="view">
<svg width="1315" height="804" viewBox="388 65 1315 804">
<polygon points="363,516 660,613 1703,263 1703,172" fill="#0a0a0a"/>
<g id="dots"></g>
<g stroke="#3a3a3a" stroke-width="1" fill="none"><path d="M427 537L513 513M907 500L950 512M1077 447L1128 458M1220 401L1270 410M1347 365L1392 369M1473 332L1490 335M1547 298L1590 303M1660 273L1670 277M668 438L720 450M820 375L860 384M1020 320L1050 330"/></g>
<g stroke="#0f8f8f" stroke-width="1" fill="none"><path d="M461 492L513 508M587 590L633 577M710 568L753 582"/></g>
<g id="diag" stroke="#16d8d8" stroke-width="1.500" fill="none"></g>
<g id="dfill"></g>
<polygon points="565,537 565,551 597,543 590,534" fill="#b7baba"/><polygon points="650,563 650,578 684,571 684,566" fill="#b7baba"/>
<polygon points="505,372 1577,143 1573,192 510,457" fill="rgba(190,220,190,.2)"/>
<polygon points="505,372 673,414 678,504 510,457" fill="rgba(190,220,190,.12)"/>
<polygon points="1577,143 1703,155 1703,210 1573,192" fill="rgba(190,220,190,.2)"/>
<g id="wb" stroke="#a9c2a6" stroke-width="1.200" fill="none"></g>
<g fill="none" stroke="#c4d8c0" stroke-width="1.400"><path d="M505 372L1577 143L1703 155M510 457L1573 192L1703 210M505 372L510 457M1577 143L1573 192"/></g>
<g id="slab"></g>
<rect x="543" y="520" width="22" height="27" fill="#d92222"/><rect x="627" y="545" width="23" height="33" fill="#d92222"/>
<polygon points="673,414 1703,160 1703,211 678,504" fill="rgba(190,220,190,.18)"/>
<g id="wf" stroke="#b6ceb2" stroke-width="1.200" fill="none"></g>
<g fill="none" stroke="#cfe2ca" stroke-width="1.400"><path d="M505 372L673 414L1703 160M510 457L678 504L1703 211M673 414L678 504"/></g>
<circle cx="674" cy="414" r="2" fill="#cfe2ca"/>
<text x="655" y="407" fill="#c6cfc2" font-size="12">p-ZL -6.80</text>
<g stroke-width="2" fill="none"><path d="M682 561V530" stroke="#18e0e0"/><path d="M682 561L662 554" stroke="#15d415"/><path d="M682 561L706 553" stroke="#f01414"/></g>
<path d="M679 532l3-9 3 9z" fill="#18c8c8"/><path d="M664 550l-7 3 7 3z" fill="#15c415"/><path d="M704 550l10 2-9 4z" fill="#e01010"/>
<text x="679" y="519" fill="#19f0f0" text-anchor="middle">Z</text><text x="652" y="556" fill="#15e015" text-anchor="middle">Y</text><text x="722" y="552" fill="#f01010" text-anchor="middle">X</text>
<g id="lbl" text-anchor="middle">
<g fill="#ff1010">
<text x="980" y="446">-30.40</text><text x="1029" y="386">-77.66</text><text x="1110" y="397">-118.45</text><text x="1258" y="326">-15.26</text><text x="1335" y="338">-25.07</text><text x="1452" y="262">-131.26</text><text x="1519" y="273">-128.54</text><text x="1541" y="245">-35.69</text><text x="1611" y="255">-20.76</text>
</g>
<g fill="#19f0f0">
<text x="555" y="551">8.13</text><text x="638" y="577">9.58</text><text x="639" y="597">623.09</text><text x="722" y="625">622.11</text><text x="964" y="520">875.85</text><text x="1045" y="536">827.48</text><text x="1206" y="435">810.91</text><text x="1284" y="450">803.77</text><text x="897" y="452">11.16</text><text x="1400" y="363">697.80</text><text x="1474" y="373">684.19</text><text x="1568" y="324">458.30</text><text x="1650" y="294">426.12</text><text x="1496" y="312">430.72</text><text x="1581" y="286">425.41</text><text x="1608" y="250">9.80</text><text x="1677" y="257">9.66</text>
</g></g>
<g stroke-width="2" fill="none"><path d="M444 733V704" stroke="#18e0e0"/><path d="M444 733L419 730" stroke="#15d415"/><path d="M444 733L463 729" stroke="#e01010"/></g>
<path d="M441 704l3-10 3 10z" fill="#16c0c0"/><path d="M420 727l-9 3 9 3z" fill="#15c415"/><path d="M461 726l9 1-8 5z" fill="#c81010"/>
<text x="441.500" y="691" fill="#19f0f0" text-anchor="middle">Z</text><text x="413" y="728" fill="#15e015" text-anchor="middle">Y</text><text x="484" y="726" fill="#f01010" text-anchor="middle">X</text>
</svg>
<div class="vt" style="top:5px">Schnittgrößen N [kN]</div>
<div class="vt" style="top:19px">LF1 : EG</div>
<div class="vt" style="top:33px">Belastung [kN/m^2]</div>
<div class="vt" style="top:785px">Max N: 875.85, Min N: -131.26 kN</div>
</div>
<div class="a" style="left:1703px;top:63px;width:6px;height:808px;background:linear-gradient(90deg,#f4f6fa,#d0d4dd)"></div>
<div id="bot"></div>
<div id="botb"><span>1.6 Stützen - Schnitte - #2</span></div>

<div id="pan"><div id="pant"><span>Panel</span><svg class="a" style="left:170px;top:5px" width="36" height="18" viewBox="0 0 36 18"><path d="M4 3h7M5 3v7M10 3v7M3 10h9M7.500 10v6" fill="none" stroke="#8a8f99" stroke-width="1.500"/><path d="M21 3l10 10M31 3L21 13" stroke="#8a8f99" stroke-width="2"/></svg></div>
<div class="a" style="left:7px;top:36px;font-size:12.800px;line-height:18px;color:#111;white-space:nowrap">Anzeigefaktoren</div></div>
<div class="g" style="top:121px"><div class="lb">Verformung:</div><div class="sp"><b><u></u></b></div></div>
<div class="g" style="top:189px"><div class="lb">Stabverläufe:</div><div class="sp on"><span>1</span><b><u></u></b></div></div>
<div class="g" style="top:257px"><div class="lb">Flächenverläufe:</div><div class="sp"><b><u></u></b></div></div>
<div class="g" style="top:325px"><div class="lb">Schnitte:</div><div class="sp"><b><u></u></b></div></div>
<div class="g" style="top:393px"><div class="lb">Lagerkräfte:</div><div class="sp"><b><u></u></b></div></div>
<div class="g" style="top:461px"><div class="lb">Trajektorien:</div><div class="sp"><b><u></u></b></div></div>
<div class="g" style="top:529px"><div class="a" style="left:2px;top:4px;width:16px;height:16px;background:#fff;border:1px solid #c8c8c8;box-sizing:border-box"></div><div class="lb" style="left:21px;color:#6c7a8c">Laststufen:</div>
<div class="a" style="left:2px;top:24px;width:107px;height:30px;background:#fff;border:1px solid #c8c8c8;box-sizing:border-box"><div class="a" style="left:1px;top:1px;width:82px;height:26px;background:#efefef"></div><svg class="a" style="left:91px;top:11px" width="10" height="7" viewBox="0 0 10 7"><path d="M1 1l4 4 4-4" fill="none" stroke="#aaa"/></svg></div>
<div class="a" style="left:108px;top:22px;width:19px;height:27px;background:#f0f0f0;border:1px solid #ddd;box-sizing:border-box"><svg class="a" style="left:3px;top:2px" width="12" height="22" viewBox="0 0 12 22"><path d="M2 7l4-4 4 4zM2 15h8l-4 4z" fill="#777"/><path d="M0 11h12" stroke="#ddd"/></svg></div></div>
<div class="bt" style="left:1717px;width:29px"><svg width="27" height="24" viewBox="0 0 27 24"><path d="M4 5h15v16H4z" fill="#f4f4f4" stroke="#333"/><path d="M6 9h8M6 12h6M6 15h5M6 18h9" stroke="#444"/><path d="M10 16l11-12 3 3-11 11-4 1z" fill="#f3d22a" stroke="#333" stroke-width=".7"/><path d="M21 4l3 3 1-2-2-2z" fill="#e78bb8"/></svg></div>
<div class="bt" style="left:1752px;width:29px"><svg width="27" height="24" viewBox="0 0 27 24"><rect x="4" y="3" width="11" height="16" rx="3" fill="#8a7d6b" stroke="#444"/><rect x="8" y="5" width="5" height="12" fill="#eee"/><path d="M15 9h9v13H15z" fill="#f2f2f2" stroke="#444"/><path d="M17 13h5M17 16h5M17 19h5" stroke="#555"/><rect x="18" y="2" width="5" height="4" fill="#888"/></svg></div>
<div class="bt" style="left:1851px;width:30px"><svg width="28" height="24" viewBox="0 0 28 24"><path d="M9 11V6a4 4 0 0 1 8 0v2" fill="none" stroke="#777" stroke-width="2"/><rect x="8" y="11" width="13" height="11" fill="#4a74e0" stroke="#334"/><rect x="8" y="11" width="13" height="3" fill="#b8c9f2"/></svg></div>
<div id="tabs"><div class="a tabi" style="left:5px;top:0;width:23px;height:25px;background:#f2f4f6;border:1px solid #c8e0e6;border-top:0;border-radius:0 0 4px 4px;box-sizing:border-box"><svg width="21" height="22" viewBox="0 0 21 22"><path d="M10.500 3v15M3 5h15M6 19h9" stroke="#6b5a10" stroke-width="1.500"/><path d="M3 6l-2 7h5zM18 6l-2 7h5z" fill="#e4c64a" stroke="#6b5a10" stroke-width=".7"/></svg></div>
<svg class="a" style="left:36px;top:3px" width="20" height="22" viewBox="0 0 20 22"><path d="M13 2l-5 9 3 2 5-9z" fill="#666" stroke="#222"/><path d="M3 19c5 2 11 0 12-7" fill="none" stroke="#333" stroke-width="2"/><rect x="2" y="18" width="15" height="2.500" fill="#222"/><circle cx="7" cy="14" r="2" fill="#888"/></svg></div>

<script>
(function(){
var NS='http://www.w3.org/2000/svg';
function P(parent,d,attrs){var e=document.createElementNS(NS,'path');e.setAttribute('d',d);for(var k in attrs)e.setAttribute(k,attrs[k]);document.getElementById(parent).appendChild(e);return e}
var V=[2886,-133],W=[-1960,-240];
function isect(a,b,c,d){var x1=a[0],y1=a[1],x2=b[0],y2=b[1],x3=c[0],y3=c[1],x4=d[0],y4=d[1];var D=(x1-x2)*(y3-y4)-(y1-y2)*(x3-x4);var t=((x1-x3)*(y3-y4)-(y1-y3)*(x3-x4))/D;return [x1+t*(x2-x1),y1+t*(y2-y1)]}
function lerp(a,b,t){return [a[0]+(b[0]-a[0])*t,a[1]+(b[1]-a[1])*t]}
function f(n){return Math.round(n*10)/10}
function steps(x0,x1,k,vx){var r=[],u=1/(vx-x0);for(var x=x0;x<=x1;){r.push(x);u+=k;x=vx-1/u}return r}

/* ground dots */
var d='';
var Ls=steps(660,1703,7.4e-6,V[0]);
var Es=[];for(var j=0;j<=12;j++){var u=1/2620+j*4.1e-6;var x=W[0]+1/u;Es.push([x,613+(x-660)*0.326])}
for(var i=0;i<Ls.length;i++){var lx=Ls[i],L=[lx,613+(lx-660)*((V[1]-613)/(V[0]-660))];
 for(j=0;j<Es.length;j++){var p=isect(W,L,V,Es[j]);if(p[0]>388&&p[0]<1703&&p[1]>65)d+='M'+Math.round(p[0])+' '+Math.round(p[1])+'h1.400'}}
P('dots',d,{stroke:'#e8e8e8','stroke-width':'1.400',fill:'none','shape-rendering':'crispEdges'});

/* cyan diagrams */
var T=[[[722,609],[683,572],[772,543],6],[[639,583],[597,545],[657,565],3],[[964,503],[954,483],[972,480],2],[[1045,520],[1017,465],[1068,450],5],[[1206,420],[1202,407],[1211,404],2],[[1284,435],[1265,387],[1305,375],5],[[1400,348],[1399,335],[1402,335],1],[[1474,359],[1459,323],[1488,315],5],[[1568,310],[1558,293],[1578,287],4],[[1650,281],[1643,267],[1659,262],3]];
var dd='',fd='';
T.forEach(function(t){var A=t[0],b=t[1],c=t[2],n=t[3];dd+='M'+b+'L'+A+'L'+c;for(var i=1;i<n;i++){var q=lerp(b,c,i/n);var e=q[0]<A[0]?(q[0]-b[0])/(A[0]-b[0]):(q[0]-c[0])/(A[0]-c[0]);var s=q[0]<A[0]?b:c;var yb=s[1]+(A[1]-s[1])*e;dd+='M'+f(q[0])+' '+f(q[1])+'V'+f(yb)}
 fd+='M'+(A[0]-2)+' '+(A[1]-4)+'h4v7h-4z'});
P('diag',dd,{});P('dfill',fd,{fill:'#16e0e0'});

/* wall posts */
var wb='',wbs=steps(510,1573,8.72e-6,V[0]);
function yL(a,s,x){return a[1]+(x-a[0])*s}
wbs.forEach(function(x){var xt=x-5+9*(x-510)/1063;wb+='M'+f(x)+' '+f(yL([510,457],-0.2474,x))+'L'+f(xt)+' '+f(yL([505,372],-0.2136,xt))});
[542,574,607,643].forEach(function(x){var xt=x-5;wb+='M'+x+' '+f(457+(x-510)*0.28)+'L'+xt+' '+f(372+(xt-505)*0.25)});
[1603,1630,1658,1685].forEach(function(x){wb+='M'+x+' '+f(192+(x-1573)*0.1385)+'L'+x+' '+f(143+(x-1577)*0.095)});
P('wb',wb,{});
var wf='',wfs=steps(678,1703,9.4e-6,V[0]);
wfs.forEach(function(x,i){if(!i)return;var xt=x-5+6*(x-678)/1025;wf+='M'+f(x)+' '+f(yL([678,504],-0.2859,x))+'L'+f(xt)+' '+f(yL([673,414],-0.2476,xt))});
P('wf',wf,{});

/* slab */
var P0=[513,508],P1=[683,557],P0f=[1573,222],P1f=[1703,246];
function strip(f0,f1,c){var a0=lerp(P0,P1,f0),a1=lerp(P0,P1,f1),b0=lerp(P0f,P1f,f0),b1=lerp(P0f,P1f,f1);P('slab','M'+a0+'L'+b0+'L'+b1+'L'+a1+'z',{fill:c})}
var yF=function(x){return P1[1]+(x-P1[0])*((P1f[1]-P1[1])/(P1f[0]-P1[0]))};
var bandN=[[513,508],[683,557],[1703,246],[1703,252],[683,571],[513,520]];
P('slab','M'+bandN.join('L')+'z',{fill:'#bcc0c0'});
strip(0,.27,'#777e7e');strip(.27,.75,'#5f6565');strip(.75,1,'#acb2b2');
var defs=document.createElementNS(NS,'linearGradient');defs.id='tg';defs.setAttribute('gradientUnits','userSpaceOnUse');defs.setAttribute('x1','700');defs.setAttribute('y1','0');defs.setAttribute('x2','1400');defs.setAttribute('y2','0');
[['0','rgba(15,135,135,0)'],['1','rgba(15,135,135,.45)']].forEach(function(s){var st=document.createElementNS(NS,'stop');st.setAttribute('offset',s[0]);st.setAttribute('stop-color',s[1]);defs.appendChild(st)});
document.getElementById('slab').appendChild(defs);
P('slab','M'+P0+'L'+P0f+'L'+lerp(P0f,P1f,.75)+'L'+lerp(P0,P1,.75)+'z',{fill:'url(#tg)'});
var m='';
for(var q=1;q<16;q++){var t=q/16;m+='M'+lerp(P0,P1,t).map(f)+'L'+lerp(P0f,P1f,t).map(f)}
steps(683,1703,1.9e-6,V[0]).forEach(function(x){var F=[x,yF(x)];var B=isect(W,F,P0,P0f);m+='M'+f(F[0])+' '+f(F[1])+'L'+f(B[0])+' '+f(B[1])});
P('slab',m,{stroke:'#129092','stroke-width':'.9',fill:'none',opacity:'.72'});
var tk='';
steps(683,1703,1.97e-6,V[0]).forEach(function(x){var y=yF(x),h=14-6*(x-683)/1020;tk+='M'+f(x)+' '+f(y)+'v'+f(h)});
for(var x=520;x<683;x+=11){var y=508+(x-513)*0.288;tk+='M'+x+' '+f(y)+'v12'}
P('slab',tk,{stroke:'#3aa6a8','stroke-width':'.8',fill:'none',opacity:'.8'});
P('slab','M'+lerp(P0,P1,.27)+'L'+lerp(P0f,P1f,.27)+'M'+lerp(P0,P1,.75)+'L'+lerp(P0f,P1f,.75),{stroke:'#d0d6d6','stroke-width':'1.200',fill:'none',opacity:'.85'});
var C=[[593,486,762,535],[920,397,1087,434],[1167,331,1331,359],[1363,278,1513,304],[1460,252,1605,276],[1548,228,1687,251]];
var cl='',rd='';
C.forEach(function(c){cl+='M'+c[0]+' '+c[1]+'L'+c[2]+' '+c[3];[0,.72].forEach(function(t){var p=[c[0]+(c[2]-c[0])*t,c[1]+(c[3]-c[1])*t];rd+='M'+f(p[0]-3)+' '+f(p[1]-1)+'h6v2h-6z'});rd+='M'+(c[2]-1.5)+' '+(c[3]-1)+'h3v4h-3zM'+(c[2]-1.5)+' '+(c[3]+6)+'h3v4h-3z'});
P('slab',cl,{stroke:'#dfe4e4','stroke-width':'1',fill:'none','stroke-dasharray':'7 3',opacity:'.8'});
P('slab',rd,{fill:'#ee1c1c'});
P('slab','M1113 389L1127 385M1445 279L1462 275M1514 286L1527 282',{stroke:'#e81818','stroke-width':'2',fill:'none'});

/* tree */
var rows=[[2,1],[2,1],[2,0],[2,1],[2,0],[2,1],[2,1],[2,0],[2,0],[2,0],[2,0],[2,0],[2,0],[2,0],[2,0],[2,0],[2,0],[2,0],[2,0],[2,0],[1,-1],[2,1],[2,1],[2,1],[2,1],[2,1],[2,1],[1,1],[1,-1],[2,1],[2,1],[2,1],[1,0],[1,0],[1,0],[1,1]];
var dots='',tic=document.getElementById('tic'),tbx=document.getElementById('tbx');
var mark={0:['r','#c9506a'],1:['r','#3a5bc8'],2:['r','#8a5a40'],3:['l','#c8892a'],4:['l','#b0552a'],5:['l','#c0502a'],6:['r','#c9c9b8'],7:['r','#3a8a50'],8:['v','#a33'],9:['l','#a33'],10:['r','#46729a'],11:['r','#555'],15:['r','#5a8fc8'],16:['r','#5a8fc8'],19:['x','#d22']};
function add(tag,at){var e=document.createElementNS(NS,tag);for(var k in at)e.setAttribute(k,at[k]);tic.appendChild(e);return e}
rows.forEach(function(r,i){var y=108+22*i,lv=r[0],ex=r[1],cx=lv==2?55:33,ix=lv==2?70:48;
 dots+='M'+(ex?cx+5:cx)+' '+(y+.5)+'H'+ix;
 var isB=i>=22&&i<=26;
 if(i==21){add('path',{d:'M'+ix+' '+(y+7)+'h15',stroke:'#444','stroke-width':'1.500'});add('path',{d:'M'+(ix+10)+' '+(y-6)+'v9',stroke:'#3a5d9a','stroke-width':'2'});add('path',{d:'M'+(ix+7)+' '+(y+1)+'h6l-3 5z',fill:'#3a5d9a'})}
 else{var u=add('use',{href:isB?'#bl':(ex==-1?'#foo':'#fo'),x:ix,y:y-9,width:16,height:16})}
 if(isB)add('rect',{x:ix+10,y:y-3,width:5,height:5,fill:i==25?'#1a9a2a':'#4a8ad8'});
 if(mark[i]){var t=mark[i][0],c=mark[i][1];
  if(t=='r')add('rect',{x:ix+4,y:y-3,width:6,height:4,fill:c});
  else if(t=='l')add('path',{d:'M'+(ix+3)+' '+(y+3)+'L'+(ix+11)+' '+(y-4),stroke:c,'stroke-width':'1.400'});
  else if(t=='v')add('path',{d:'M'+(ix+7)+' '+(y-4)+'v8',stroke:c,'stroke-width':'1.600'});
  else add('path',{d:'M'+(ix+3)+' '+(y-3)+'l8 6M'+(ix+11)+' '+(y-3)+'l-8 6',stroke:c,'stroke-width':'1.300'});}
 if(ex){var b=document.createElementNS(NS,'rect');b.setAttribute('x',cx-5+.5);b.setAttribute('y',y-4.5);b.setAttribute('width',10);b.setAttribute('height',10);b.setAttribute('fill','#eef0f6');b.setAttribute('stroke','#8a94a8');tbx.appendChild(b);
 var s=document.createElementNS(NS,'path');s.setAttribute('d','M'+(cx-2.5)+' '+(y+.5)+'h6'+(ex==1?'M'+(cx+.5)+' '+(y-2.5)+'v6':''));s.setAttribute('stroke','#2a3f7c');s.setAttribute('fill','none');tbx.appendChild(s)}
});
document.getElementById('tdots').setAttribute('d',dots);
})();
</script>
</body></html>
